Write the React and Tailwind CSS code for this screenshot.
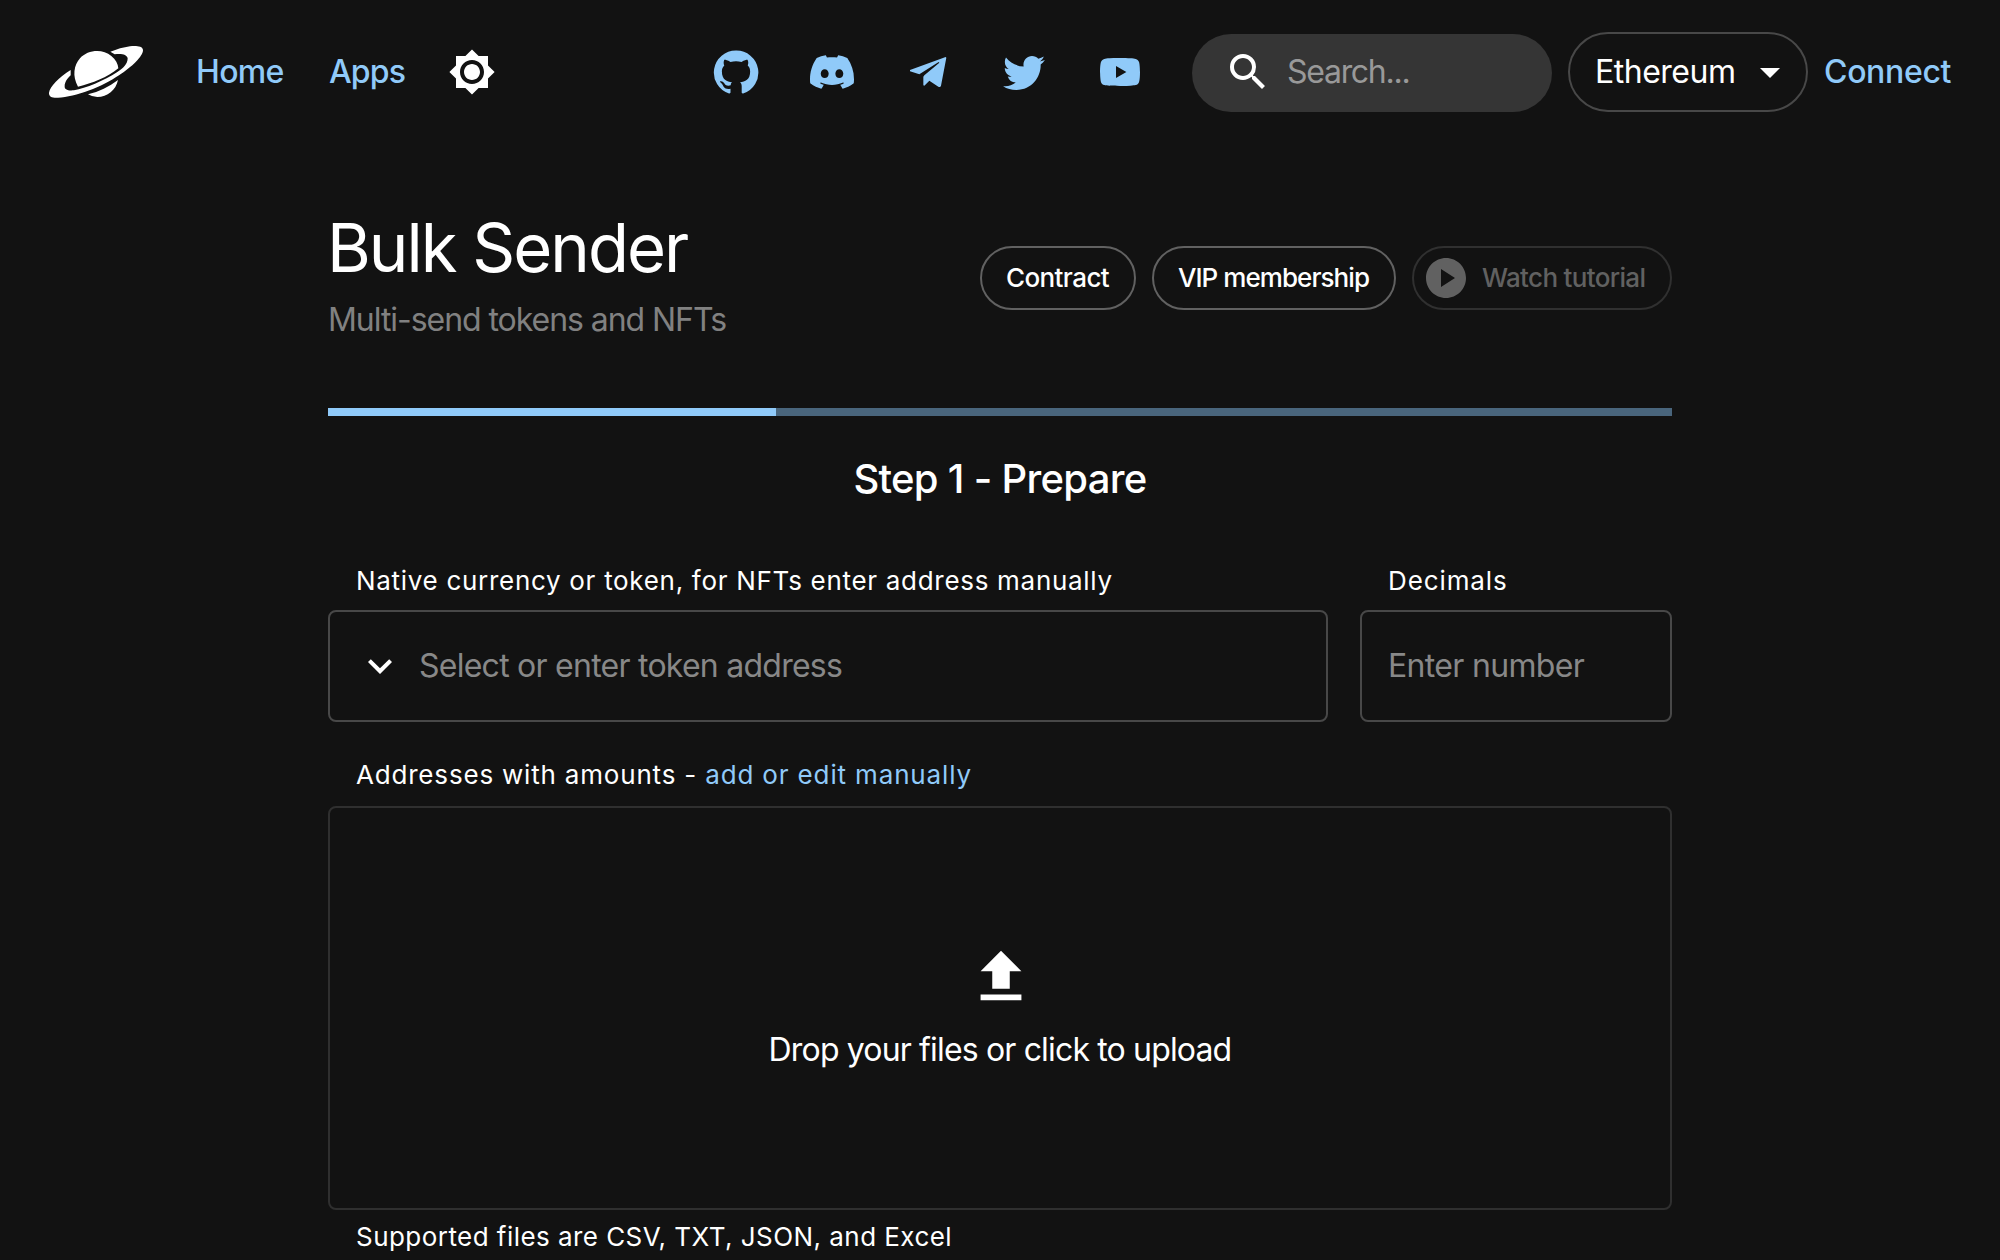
import { MdBrightness7, MdSearch, MdArrowDropDown, MdPlayCircle, MdExpandMore, MdUpload } from "react-icons/md";
import { SiDiscord } from "react-icons/si";

const GITHUB =
  "M12 1.27a11 11 0 00-3.48 21.46c.55.09.73-.28.73-.55v-1.84c-3.03.64-3.67-1.46-3.67-1.46-.55-1.29-1.28-1.65-1.28-1.65-.92-.65.1-.65.1-.65 1.1 0 1.73 1.1 1.73 1.1.92 1.65 2.57 1.2 3.21.92a2 2 0 01.64-1.47c-2.47-.27-5.04-1.19-5.04-5.5 0-1.1.46-2.1 1.2-2.84a3.76 3.76 0 010-2.93s.91-.28 3.11 1.1c1.8-.49 3.7-.49 5.5 0 2.1-1.38 3.02-1.1 3.02-1.1a3.76 3.76 0 01.1 2.93c.83.74 1.2 1.74 1.2 2.94 0 4.21-2.57 5.13-5.04 5.4.45.37.82.92.82 2.02v3.03c0 .27.1.64.73.55A11 11 0 0012 1.27";
const TWITTER =
  "M22.46 6c-.77.35-1.6.58-2.46.69.88-.53 1.56-1.37 1.88-2.38-.83.5-1.75.85-2.72 1.05C18.37 4.5 17.26 4 16 4c-2.35 0-4.27 1.92-4.27 4.29 0 .34.04.67.11.98C8.28 9.09 5.11 7.38 3 4.79c-.37.63-.58 1.37-.58 2.15 0 1.49.75 2.81 1.91 3.56-.71 0-1.37-.2-1.95-.5v.03c0 2.08 1.48 3.82 3.44 4.21a4.22 4.22 0 0 1-1.93.07 4.28 4.28 0 0 0 4 2.98 8.521 8.521 0 0 1-5.33 1.84c-.34 0-.68-.02-1.02-.06C3.44 20.29 5.7 21 8.12 21 16 21 20.33 14.46 20.33 8.79c0-.19 0-.37-.01-.56.84-.6 1.56-1.36 2.14-2.23z";
const YOUTUBE =
  "M10 15l5.19-3L10 9v6m11.56-7.83c.13.47.22 1.1.28 1.9.07.8.1 1.49.1 2.09L22 12c0 2.19-.16 3.8-.44 4.83-.25.9-.83 1.48-1.73 1.73-.47.13-1.33.22-2.65.28-1.3.07-2.49.1-3.59.1L12 19c-4.19 0-6.8-.16-7.83-.44-.9-.25-1.48-.83-1.73-1.73-.13-.47-.22-1.1-.28-1.9-.07-.8-.1-1.49-.1-2.09L2 12c0-2.19.16-3.8.44-4.83.25-.9.83-1.48 1.73-1.73.47-.13 1.33-.22 2.65-.28 1.3-.07 2.49-.1 3.59-.1L12 5c4.19 0 6.8.16 7.83.44.9.25 1.48.83 1.73 1.73z";

function Logo() {
  return (
    <svg viewBox="0 0 318 192" className="h-16 w-[106px]" fill="currentColor">
      <path d="M102 140C84 108 90 75 108 55C130 30 175 25 202 48C215 58 222 72 223 85C190 112 145 130 102 140Z" />
      <path d="M132 163C165 155 195 140 222 120C216 150 190 171 160 171Q145 171 132 163Z" />
      <path d="M80 90C45 112 18 140 15 158C14 170 25 174 42 173C95 172 175 140 225 106C262 82 298 48 297 30C296 18 275 17 258 19Q228 23 199 35L212 43C232 40 249 43 251 55C251 72 238 85 220 96C180 122 125 145 90 151C70 153 61 148 62 138C62 127 70 115 80 106Z" />
    </svg>
  );
}

function PathIcon({ d }) {
  return (
    <svg viewBox="0 0 24 24" className="size-12" fill="currentColor">
      <path d={d} />
    </svg>
  );
}

function TelegramIcon() {
  return (
    <svg viewBox="12 0 144 144" className="size-12" fill="currentColor">
      <path d="M137 27L30 66V70L58 79L116 42L118 44L73 82L70 86V112L73 113L88 98L115 116Q121 119 123 113L139 29Z" />
    </svg>
  );
}

function SocialLink({ children }) {
  return <a className="flex h-24 w-24 items-center justify-center">{children}</a>;
}

function Header() {
  return (
    <header className="flex h-36 items-center pl-11 pr-12 text-[32px] leading-[48px]">
      <Logo />
      <nav className="ml-[46px] flex items-center font-medium text-[#90caf9]">
        <a className="w-[133px] tracking-[-0.66px]">Home</a>
        <a className="w-[119px] tracking-[-0.85px]">Apps</a>
        <MdBrightness7 className="size-12 text-white" />
      </nav>
      <div className="ml-auto flex items-center text-[#90caf9]">
        <SocialLink><PathIcon d={GITHUB} /></SocialLink>
        <SocialLink><SiDiscord className="size-11" /></SocialLink>
        <SocialLink><TelegramIcon /></SocialLink>
        <SocialLink><PathIcon d={TWITTER} /></SocialLink>
        <SocialLink><PathIcon d={YOUTUBE} /></SocialLink>
      </div>
      <div className="ml-6 mt-0.5 flex h-[78px] w-[360px] items-center rounded-full bg-[#353535] pl-8">
        <MdSearch className="mb-0.5 size-12" />
        <span className="ml-[15px] pb-0.5 tracking-[-1.28px] text-[#999999]">Search...</span>
      </div>
      <div className="ml-4 flex h-20 w-60 items-center justify-between rounded-full border-2 border-[#484848] pl-[25px] pr-3">
        <span className="tracking-[-0.5px]">Ethereum</span>
        <MdArrowDropDown className="size-12" />
      </div>
      <a className="ml-4 w-32 whitespace-nowrap font-medium tracking-[-0.34px] text-[#90caf9]">Connect</a>
    </header>
  );
}

export default function App() {
  return (
    <div className="h-[1260px] w-[2000px] overflow-hidden bg-[#121212] font-['Inter',sans-serif] text-white">
      <Header />
      <main className="mx-auto w-[1344px] pt-16">
        <div className="flex items-start justify-between">
          <div>
            <h1 className="-ml-px text-[67px] leading-[80px] tracking-[-2px]">Bulk Sender</h1>
            <p className="mt-2 text-[32px] leading-[48px] tracking-[-1.05px] text-[#818181]">Multi-send tokens and NFTs</p>
          </div>
          <div className="mt-[38px] flex gap-4 text-[26px] font-medium leading-[40px]">
            <button className="flex h-16 w-[156px] items-center justify-center rounded-full border-2 border-[#616161] pb-px pr-px tracking-[-0.58px]">Contract</button>
            <button className="flex h-16 w-[244px] items-center justify-center rounded-full border-2 border-[#616161] pb-px pr-px tracking-[-0.94px]">VIP membership</button>
            <button className="flex h-16 w-[260px] items-center rounded-full border-2 border-[#303030] pl-2 tracking-[-0.67px] text-[#616161]">
              <MdPlayCircle className="size-12" />
              <span className="ml-3 pb-px">Watch tutorial</span>
            </button>
          </div>
        </div>

        <div className="mt-16 h-2 bg-[#49657c]">
          <div className="h-2 w-1/3 bg-[#90caf9]" />
        </div>
        <h2 className="mt-[39px] text-center text-[40px] font-medium leading-[48px] tracking-[-0.69px]">Step 1 - Prepare</h2>

        <div className="mt-[58px] grid grid-cols-[1000px_312px] gap-8">
          <div>
            <label className="block whitespace-nowrap pl-7 text-[26px] leading-[40px] tracking-[0.7px]">
              Native currency or token, for NFTs enter address manually
            </label>
            <div className="mt-[9px] flex h-28 items-center rounded-lg border-2 border-[#484848] pl-[26px]">
              <MdExpandMore className="size-12" />
              <span className="ml-[15px] text-[32px] leading-[48px] tracking-[-0.75px] text-[#888888]">Select or enter token address</span>
            </div>
          </div>
          <div>
            <label className="block pl-7 text-[26px] leading-[40px] tracking-[0.9px]">Decimals</label>
            <div className="mt-[9px] flex h-28 items-center rounded-lg border-2 border-[#484848] pl-[26px]">
              <span className="text-[32px] leading-[48px] tracking-[-0.67px] text-[#888888]">Enter number</span>
            </div>
          </div>
        </div>

        <div className="mt-[33px] whitespace-pre pl-7 text-[26px] leading-[40px]">
          <span className="tracking-[0.81px]">Addresses with amounts - </span>
          <a className="tracking-[0.85px] text-[#90caf9]">add or edit manually</a>
        </div>
        <div className="mt-[11px] flex h-[404px] flex-col items-center rounded-lg border-2 border-[#2f2f2f] pt-[134px]">
          <MdUpload className="ml-0.5 size-[70px]" />
          <span className="mt-3.5 text-[32px] leading-[48px] tracking-[-0.84px]">Drop your files or click to upload</span>
        </div>
        <p className="mt-[7px] pl-7 text-[26px] leading-[40px] tracking-[0.45px]">Supported files are CSV, TXT, JSON, and Excel</p>
      </main>
    </div>
  );
}
